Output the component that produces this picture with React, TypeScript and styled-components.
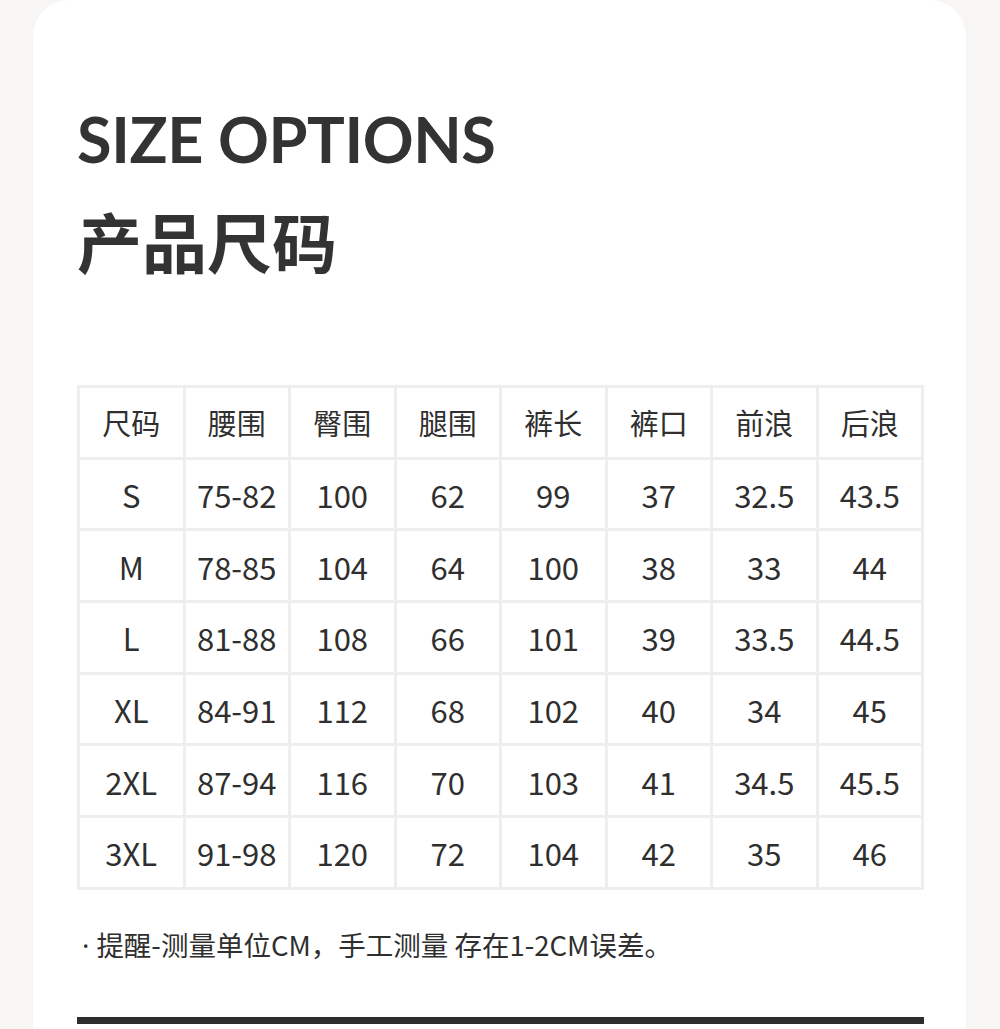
import React from "react";
import styled, { createGlobalStyle } from "styled-components";

const Global = createGlobalStyle`
  html, body { margin: 0; padding: 0; background: #f7f6f4; }
  body { font-family: "Noto Sans CJK SC", "Noto Sans", sans-serif; color: #333; }
`;

const Page = styled.div`
  padding: 0 34px 0 33px;
  height: 1029px;
  overflow: hidden;
`;

const Card = styled.section`
  background: #fff;
  border-radius: 36px 36px 0 0;
  padding: 104px 42px 0 44px;
  min-height: 1100px;
`;

const EnTitle = styled.h1`
  margin: 0;
  font-family: Lato, "Noto Sans", sans-serif;
  font-weight: 700;
  font-size: 63px;
  line-height: 70px;
  letter-spacing: -0.4px;
  color: #333;
`;

const CnTitle = styled.h2`
  margin: 26px 0 0;
  font-family: "Noto Sans CJK SC", sans-serif;
  font-weight: 700;
  font-size: 65px;
  line-height: 80px;
  color: #333;
`;

const Table = styled.div`
  margin-top: 105px;
  display: grid;
  grid-template-columns: repeat(8, 1fr);
  grid-auto-rows: 68.7px;
  gap: 3px;
  padding: 3px;
  background: #eeeeee;
`;

const Cell = styled.div<{ $head?: boolean }>`
  background: #fff;
  display: flex;
  align-items: center;
  justify-content: center;
  font-family: "Noto Sans CJK SC", sans-serif;
  font-weight: 400;
  font-size: ${(p) => (p.$head ? "29px" : "31px")};
  color: #2f2f2f;
  padding-top: ${(p) => (p.$head ? "0" : "1px")};
`;

const Note = styled.p`
  margin: 34px 0 0 5px;
  font-family: "Noto Sans CJK SC", sans-serif;
  font-weight: 400;
  font-size: 27.5px;
  line-height: 40px;
  color: #2f2f2f;
`;

const Dot = styled.span`
  font-family: "Noto Sans", sans-serif;
  margin-right: 7px;
`;

const Bar = styled.div`
  margin-top: 51px;
  height: 7px;
  background: #2d2d2d;
`;

const headers = ["尺码", "腰围", "臀围", "腿围", "裤长", "裤口", "前浪", "后浪"];
const rows = [
  ["S", "75-82", "100", "62", "99", "37", "32.5", "43.5"],
  ["M", "78-85", "104", "64", "100", "38", "33", "44"],
  ["L", "81-88", "108", "66", "101", "39", "33.5", "44.5"],
  ["XL", "84-91", "112", "68", "102", "40", "34", "45"],
  ["2XL", "87-94", "116", "70", "103", "41", "34.5", "45.5"],
  ["3XL", "91-98", "120", "72", "104", "42", "35", "46"],
];

export default function App() {
  return (
    <Page>
      <Global />
      <Card>
        <EnTitle>SIZE OPTIONS</EnTitle>
        <CnTitle>产品尺码</CnTitle>
        <Table>
          {headers.map((h) => (
            <Cell key={h} $head>
              {h}
            </Cell>
          ))}
          {rows.flatMap((r, i) =>
            r.map((v, j) => <Cell key={`${i}-${j}`}>{v}</Cell>)
          )}
        </Table>
        <Note>
          <Dot>·</Dot>提醒-测量单位CM，手工测量 存在1-2CM误差。
        </Note>
        <Bar />
      </Card>
    </Page>
  );
}
